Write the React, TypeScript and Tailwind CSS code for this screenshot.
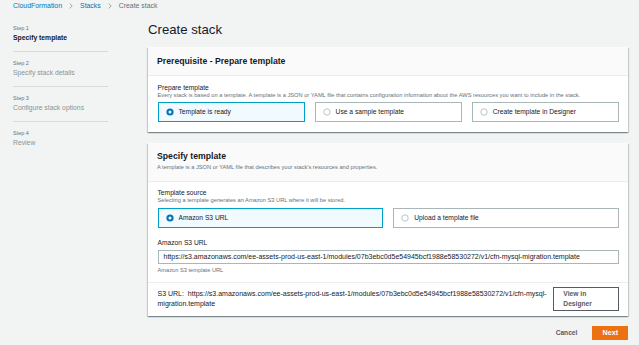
import React from 'react'

const steps = [
  { label: 'Step 1', name: 'Specify template', active: true },
  { label: 'Step 2', name: 'Specify stack details', active: false },
  { label: 'Step 3', name: 'Configure stack options', active: false },
  { label: 'Step 4', name: 'Review', active: false },
]

const url =
  'https://s3.amazonaws.com/ee-assets-prod-us-east-1/modules/07b3ebc0d5e54945bcf1988e58530272/v1/cfn-mysql-migration.template'

const Chevron = () => (
  <svg width="4" height="6" viewBox="0 0 4 6" className="mx-[7px]">
    <path d="M0.7 0.6 L3.2 3 L0.7 5.4" fill="none" stroke="#879596" strokeWidth="0.8" />
  </svg>
)

const Radio = ({ checked }: { checked: boolean }) => (
  <svg width="8" height="8" viewBox="0 0 8 8" className="shrink-0">
    {checked ? (
      <>
        <circle cx="4" cy="4" r="3.6" fill="#0073bb" />
        <circle cx="4" cy="4" r="1.5" fill="#fff" />
      </>
    ) : (
      <circle cx="4" cy="4" r="3.2" fill="#fff" stroke="#aab7b8" strokeWidth="0.8" />
    )}
  </svg>
)

const Tile = ({ label, checked }: { label: string; checked: boolean }) => (
  <div
    className={`flex-1 h-[20px] flex items-center gap-[5px] pl-[7px] border ${
      checked ? 'bg-[#f1faff] border-[#00a1c9]' : 'bg-white border-[#aab7b8]'
    }`}
  >
    <Radio checked={checked} />
    <span className="text-[6.7px] leading-[8px] text-[#16191f]">{label}</span>
  </div>
)

const cardShadow =
  'shadow-[0_1px_1px_0_rgba(0,28,36,0.3),1px_1px_1px_0_rgba(0,28,36,0.15),-1px_1px_1px_0_rgba(0,28,36,0.15)]'

export default function App() {
  return (
    <div className="w-[639px] h-[345px] overflow-hidden bg-[#f2f3f3] font-['Liberation_Sans',Arial,sans-serif]">
      {/* Breadcrumb */}
      <nav className="h-[12px] pl-[13px] flex items-center text-[6.9px] leading-[8px]">
        <span className="text-[#0073bb]">CloudFormation</span>
        <Chevron />
        <span className="text-[#0073bb]">Stacks</span>
        <Chevron />
        <span className="text-[#687078]">Create stack</span>
      </nav>

      <div className="flex">
        {/* Steps */}
        <aside className="w-[148px] shrink-0 pl-[13px] pt-[12.5px]">
          {steps.map((s, i) => (
            <div key={s.label} className="w-[95px]">
              <div className="text-[5.5px] leading-[7px] text-[#687078]">{s.label}</div>
              <div
                className={`mt-[2.5px] text-[6.8px] leading-[8px] ${
                  s.active ? 'font-bold text-[#16191f]' : 'text-[#879596]'
                }`}
              >
                {s.name}
              </div>
              {i < steps.length - 1 && <div className="mt-[8.5px] mb-[8px] border-t border-[#d5dbdb]" />}
            </div>
          ))}
        </aside>

        {/* Main */}
        <main className="flex-1 pr-[10.7px] pt-[10.3px]">
          <h1 className="text-[13.2px] leading-[16px] text-[#16191f]">Create stack</h1>

          {/* Prerequisite card */}
          <section className={`mt-[9px] bg-white ${cardShadow}`}>
            <div className="h-[29px] flex items-center px-[9px] bg-[#fafafa] border-b border-[#eaeded]">
              <h2 className="text-[8.7px] leading-[11px] font-bold text-[#16191f]">Prerequisite - Prepare template</h2>
            </div>
            <div className="px-[9.5px] pt-[7.7px] pb-[9.7px]">
              <div className="text-[6.7px] leading-[8px] text-[#16191f]">Prepare template</div>
              <div className="text-[5.7px] leading-[7px] text-[#687078]">
                Every stack is based on a template. A template is a JSON or YAML file that contains configuration
                information about the AWS resources you want to include in the stack.
              </div>
              <div className="mt-[3.5px] flex gap-[10px]">
                <Tile label="Template is ready" checked />
                <Tile label="Use a sample template" checked={false} />
                <Tile label="Create template in Designer" checked={false} />
              </div>
            </div>
          </section>

          {/* Specify template card */}
          <section className={`mt-[11px] bg-white ${cardShadow}`}>
            <div className="px-[9px] pt-[8px] pb-[9.5px] bg-[#fafafa] border-b border-[#eaeded]">
              <h2 className="text-[8.7px] leading-[11px] font-bold text-[#16191f]">Specify template</h2>
              <div className="mt-[2px] text-[5.7px] leading-[7px] text-[#687078]">
                A template is a JSON or YAML file that describes your stack's resources and properties.
              </div>
            </div>
            <div className="px-[9.5px] pt-[7.5px] pb-[7.5px] border-b border-[#eaeded]">
              <div className="text-[6.7px] leading-[8px] text-[#16191f]">Template source</div>
              <div className="text-[5.7px] leading-[7px] text-[#687078]">
                Selecting a template generates an Amazon S3 URL where it will be stored.
              </div>
              <div className="mt-[4px] flex gap-[10px]">
                <Tile label="Amazon S3 URL" checked />
                <Tile label="Upload a template file" checked={false} />
              </div>
              <div className="mt-[10.4px] text-[6.7px] leading-[8px] text-[#16191f]">Amazon S3 URL</div>
              <div className="mt-[3.3px] h-[14px] flex items-center pl-[5px] border border-[#aab7b8] bg-white">
                <span className="text-[7px] leading-[8px] text-[#16191f] whitespace-nowrap">{url}</span>
              </div>
              <div className="mt-[3.2px] text-[5.7px] leading-[7px] text-[#687078]">Amazon S3 template URL</div>
            </div>
            <div className="px-[9.5px] pt-[4px] pb-[5px] flex items-center justify-between">
              <p className="w-[392px] text-[7px] leading-[9.7px] text-[#16191f]">{`S3 URL:\u00a0 ${url}`}</p>
              <button className="w-[66px] h-[24px] pl-[9.5px] text-left border border-[#545b64] bg-white text-[6.7px] leading-[9.7px] font-bold text-[#545b64]">
                View in
                <br />
                Designer
              </button>
            </div>
          </section>

          {/* Actions */}
          <div className="mt-[10px] flex items-center justify-end gap-[15px]">
            <button className="text-[6.6px] leading-[8px] font-bold text-[#545b64]">Cancel</button>
            <button className="w-[36px] h-[14.3px] bg-[#ec7211] text-[7.2px] leading-[8px] font-bold text-white">
              Next
            </button>
          </div>
        </main>
      </div>
    </div>
  )
}
